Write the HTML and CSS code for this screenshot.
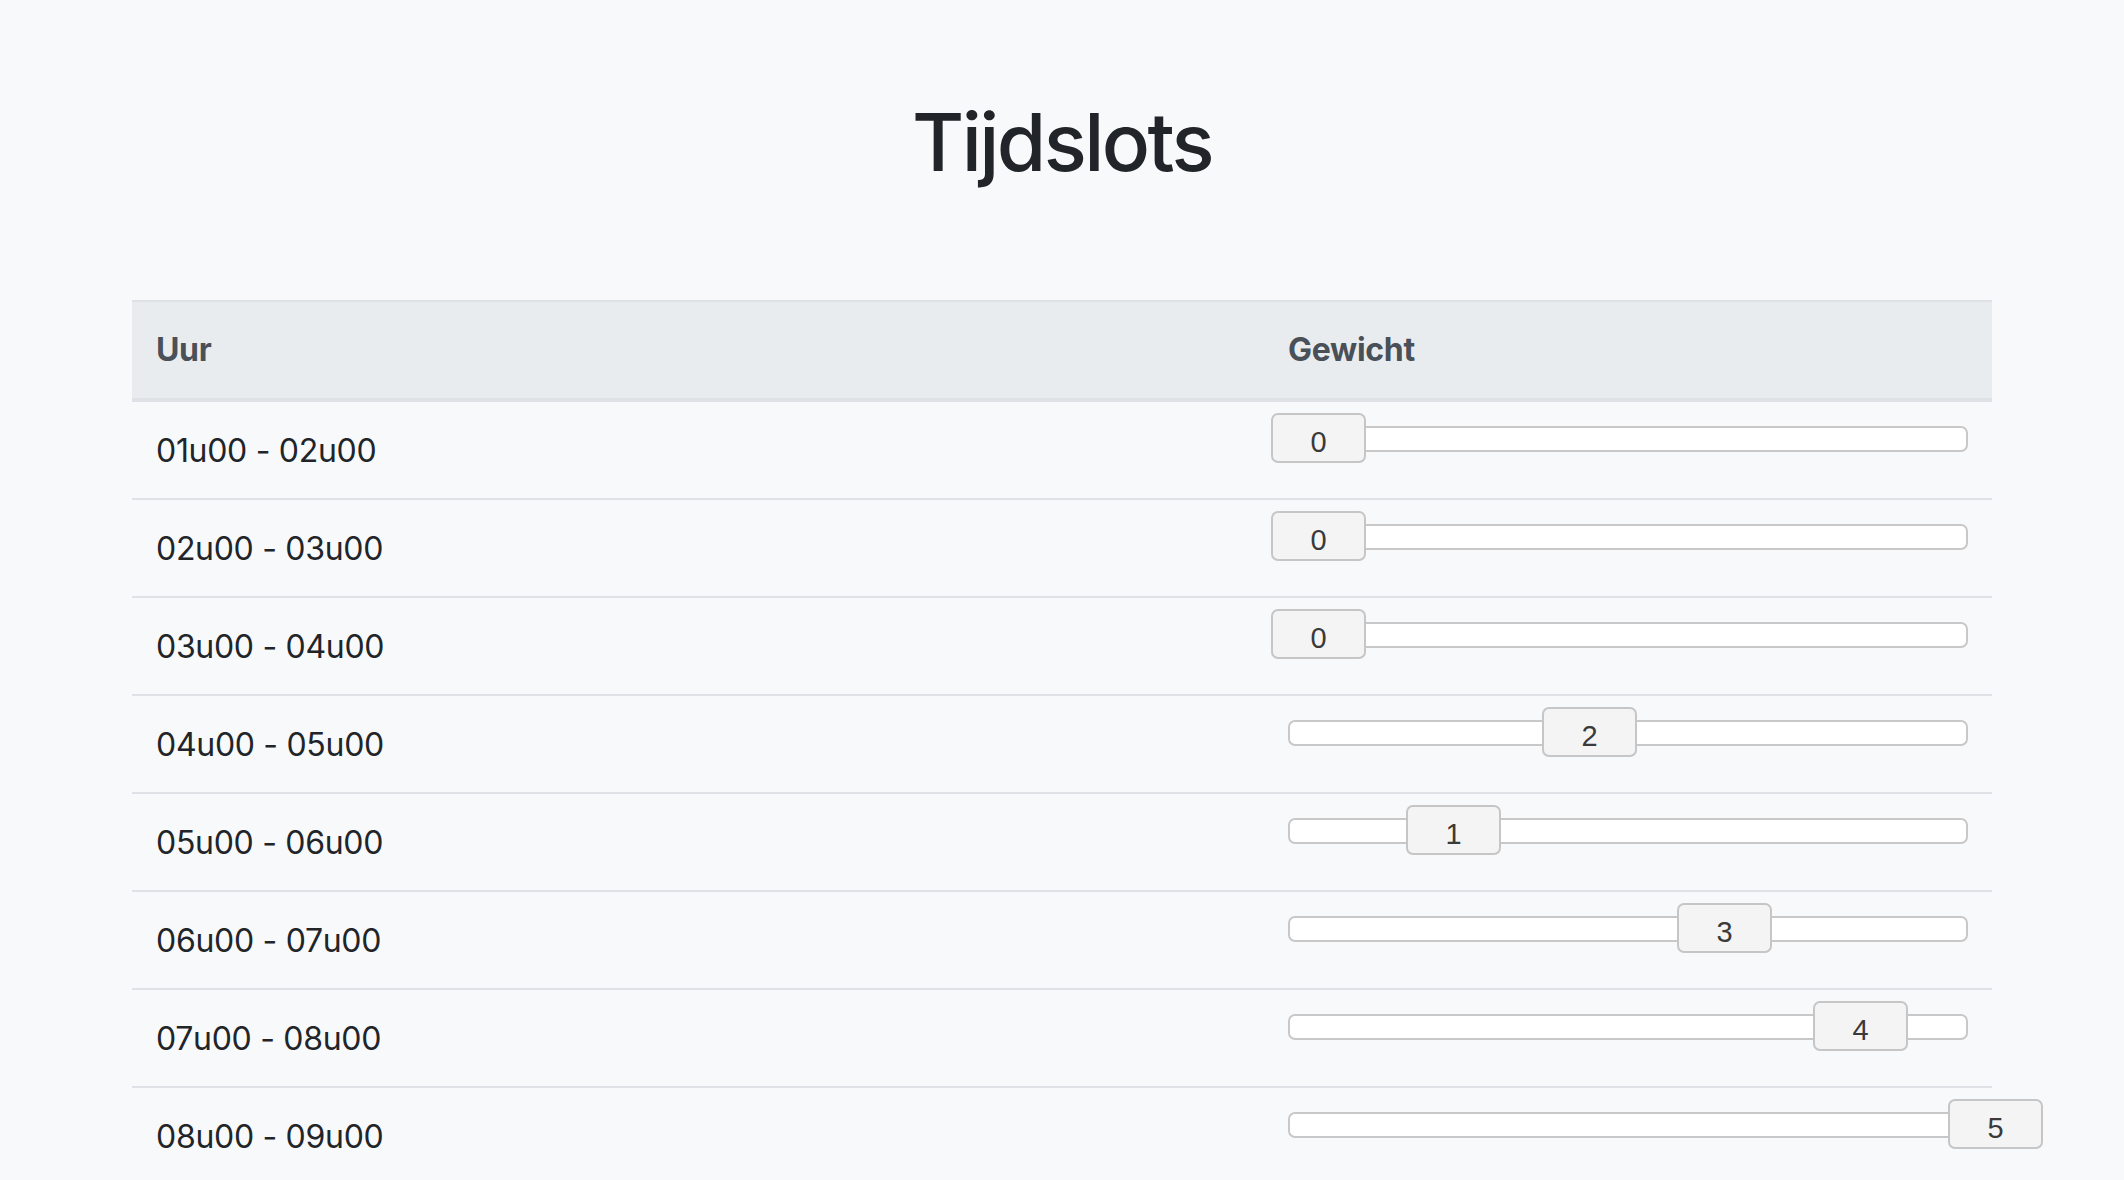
FILE: index.html
```html
<!DOCTYPE html>
<html lang="nl">
<head>
<meta charset="utf-8">
<title>Tijdslots</title>
<link rel="stylesheet" href="styles.css">
</head>
<body>
<div class="container">
  <h1 class="title">Tijdslots</h1>
  <table class="table">
    <thead>
      <tr><th class="col-hour">Uur</th><th class="col-weight">Gewicht</th></tr>
    </thead>
    <tbody>
      <tr><td>01u00 - 02u00</td><td class="slider-cell"><div class="slider"><div class="thumb" style="left:-19px">0</div></div></td></tr>
      <tr><td>02u00 - 03u00</td><td class="slider-cell"><div class="slider"><div class="thumb" style="left:-19px">0</div></div></td></tr>
      <tr><td>03u00 - 04u00</td><td class="slider-cell"><div class="slider"><div class="thumb" style="left:-19px">0</div></div></td></tr>
      <tr><td>04u00 - 05u00</td><td class="slider-cell"><div class="slider"><div class="thumb" style="left:252px">2</div></div></td></tr>
      <tr><td>05u00 - 06u00</td><td class="slider-cell"><div class="slider"><div class="thumb" style="left:116px">1</div></div></td></tr>
      <tr><td>06u00 - 07u00</td><td class="slider-cell"><div class="slider"><div class="thumb" style="left:387px">3</div></div></td></tr>
      <tr><td>07u00 - 08u00</td><td class="slider-cell"><div class="slider"><div class="thumb" style="left:523px">4</div></div></td></tr>
      <tr><td>08u00 - 09u00</td><td class="slider-cell"><div class="slider"><div class="thumb" style="left:658px">5</div></div></td></tr>
    </tbody>
  </table>
</div>
</body>
</html>
```
FILE: styles.css
```css
html, body {
  margin: 0;
  padding: 0;
}
body {
  background: #f8f9fa;
  color: #212529;
  font-family: Inter, "Noto Sans", "Liberation Sans", sans-serif;
  font-size: 32px;
  line-height: 48px;
}
.container {
  width: 1920px;
  box-sizing: border-box;
  margin: 0 auto;
  padding: 94px 30px 0;
}
.title {
  margin: 0 0 110px;
  text-align: center;
  font-size: 80px;
  line-height: 96px;
  font-weight: 500;
  letter-spacing: -2.6px;
  color: #212529;
}
.table {
  width: 100%;
  border-collapse: collapse;
}
.table th,
.table td {
  padding: 25px 24px 23px;
  text-align: left;
  vertical-align: top;
  border-top: 2px solid #dee2e6;
  letter-spacing: -0.3px;
}
.table thead th {
  padding: 24px;
  background: #e9ecef;
  color: #495057;
  font-weight: 700;
  border-bottom: 4px solid #dee2e6;
}
.table td.slider-cell {
  padding-top: 24px;
  padding-bottom: 24px;
}
.col-hour {
  width: 1084px;
}
.slider {
  position: relative;
  height: 26px;
  box-sizing: border-box;
  background: #fff;
  border: 2px solid #c8c8c8;
  border-radius: 7px;
}
.thumb {
  position: absolute;
  top: -15px;
  width: 95px;
  height: 50px;
  box-sizing: border-box;
  background: #f4f4f4;
  border: 2px solid #c6c6c6;
  border-radius: 7px;
  font-family: "Liberation Sans", Arial, sans-serif;
  font-size: 29px;
  line-height: 54px;
  letter-spacing: 0;
  text-align: center;
  color: #3a3a3a;
}
```
